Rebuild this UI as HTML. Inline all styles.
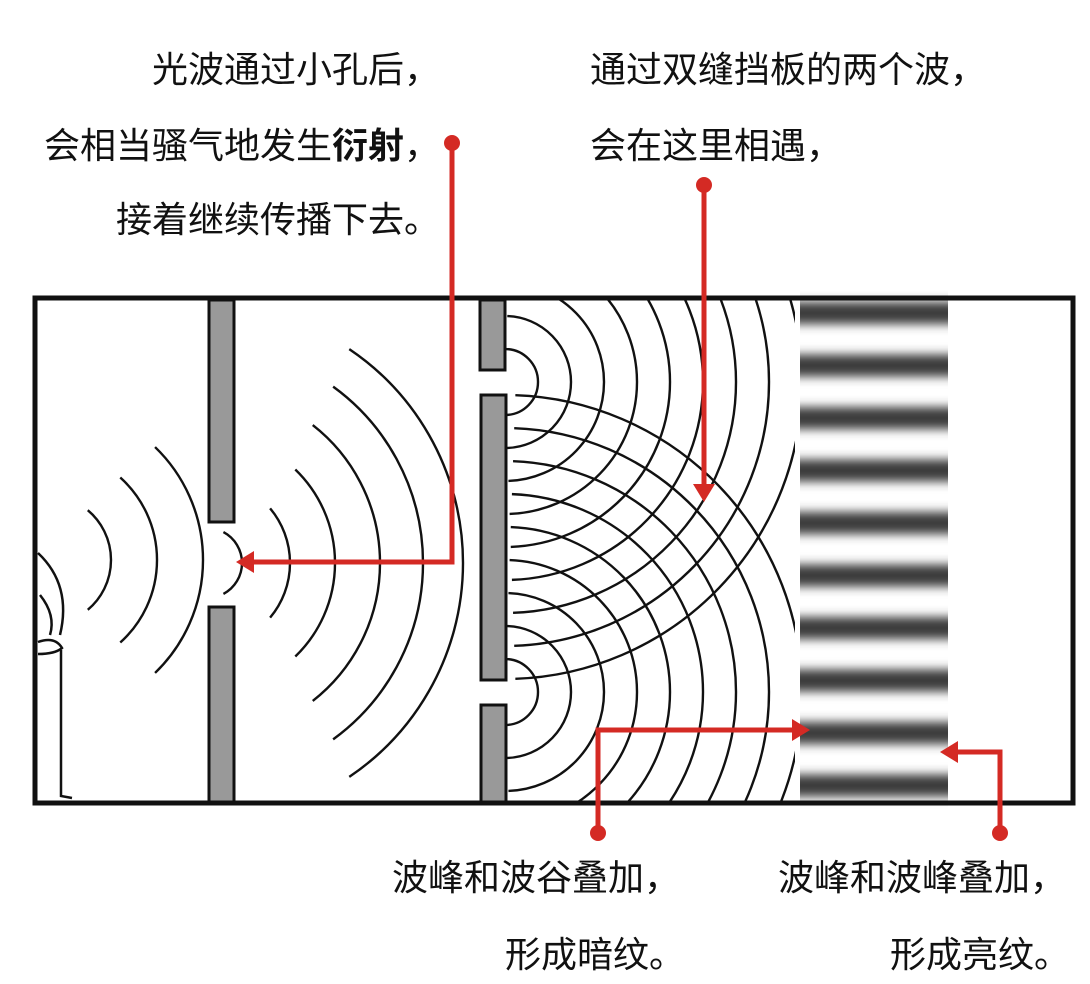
<!DOCTYPE html>
<html><head><meta charset="utf-8">
<style>
html,body{margin:0;padding:0;background:#fff;}
svg{display:block;}
text{font-family:"Liberation Sans","Noto Sans CJK SC",sans-serif;font-size:36px;fill:#111;}
</style></head>
<body>
<svg id="s" width="1090" height="984" viewBox="0 0 1090 984" xmlns="http://www.w3.org/2000/svg">
<defs>
<filter id="bl" x="-5%" y="-100%" width="110%" height="300%"><feGaussianBlur stdDeviation="0 5"/></filter>
<clipPath id="cl"><rect x="36" y="299" width="170" height="503"/></clipPath>
<clipPath id="cm"><rect x="228" y="299" width="250" height="503"/></clipPath>
<clipPath id="cr"><rect x="505" y="299" width="290" height="503"/></clipPath>
</defs>
<rect width="1090" height="984" fill="#fff"/>
<g id="stripes" filter="url(#bl)"></g>
<rect x="795" y="296" width="4" height="508" fill="#fff"/>
<rect x="948" y="296" width="6" height="508" fill="#fff"/>
<g id="arcs" fill="none" stroke="#111" stroke-width="2.4"></g>
<g fill="none" stroke="#111" stroke-width="2.5">
<path d="M38 553 Q72 585 60 635"/>
<path d="M40 595 Q56 615 50 635"/>
<path d="M38 642 Q55 636 62 648 Q55 654 38 654"/>
<path d="M61 650 L61 796 L72 798"/>
</g>
<g fill="#999" stroke="#111" stroke-width="3">
<rect x="209" y="300" width="25" height="222"/>
<rect x="209" y="607" width="25" height="197"/>
<rect x="480" y="300" width="25" height="70"/>
<rect x="481" y="395" width="25" height="285"/>
<rect x="481" y="705" width="25" height="99"/>
</g>
<rect x="35" y="298" width="1038" height="505" fill="none" stroke="#111" stroke-width="5"/>
<g stroke="#d42a24" stroke-width="5" fill="none">
<path d="M452 143 V562 H250"/>
<path d="M704 185 V490"/>
<path d="M598 833 V730 H795"/>
<path d="M1000 833 V752 H955"/>
</g>
<g fill="#d42a24">
<circle cx="452" cy="143" r="8"/><circle cx="704" cy="185" r="8"/>
<circle cx="598" cy="833" r="8"/><circle cx="1000" cy="833" r="8"/>
<path d="M236 562 L254 551 L254 573Z"/>
<path d="M704 502 L693 484 L715 484Z"/>
<path d="M810 730 L792 719 L792 741Z"/>
<path d="M940 752 L958 741 L958 763Z"/>
</g>
<text x="440" y="82" text-anchor="end">光波通过小孔后，</text>
<text x="440" y="158" text-anchor="end">会相当骚气地发生<tspan font-weight="bold">衍射</tspan>，</text>
<text x="440" y="232" text-anchor="end">接着继续传播下去。</text>
<text x="590" y="82">通过双缝挡板的两个波，</text>
<text x="590" y="158">会在这里相遇，</text>
<text x="392" y="890">波峰和波谷叠加，</text>
<text x="505" y="967">形成暗纹。</text>
<text x="778" y="890">波峰和波峰叠加，</text>
<text x="890" y="967">形成亮纹。</text>
</svg>
<script>
var NS="http://www.w3.org/2000/svg";
var st=document.getElementById("stripes");
for(var i=0;i<10;i++){var r=document.createElementNS(NS,"rect");
r.setAttribute("x",800);r.setAttribute("width",148);
var cy=313+i*52.5;r.setAttribute("y",cy-11);r.setAttribute("height",22);
r.setAttribute("fill","#3a3a3a");st.appendChild(r);}
var g=document.getElementById("arcs");
function arc(cx,cy,r,a,clip){var a1=-a*Math.PI/180,a2=a*Math.PI/180;
var x1=cx+r*Math.cos(a1),y1=cy+r*Math.sin(a1),x2=cx+r*Math.cos(a2),y2=cy+r*Math.sin(a2);
var p=document.createElementNS(NS,"path");
p.setAttribute("d","M"+x1+" "+y1+" A"+r+" "+r+" 0 0 1 "+x2+" "+y2);
if(clip)p.setAttribute("clip-path","url(#"+clip+")");g.appendChild(p);}
arc(46,560,65,50,"cl");arc(46,560,111,48,"cl");arc(46,560,157,46,"cl");
arc(207,563,35,62);
[85,130,175,218,258].forEach(function(r,i){arc(205,563,r,[40,46,52,54,56][i],"cm");});
for(var k=1;k<=9;k++){var r=k*33;
arc(505,382,r,88,"cr");arc(505,692,r,88,"cr");}
</script>
</body></html>
